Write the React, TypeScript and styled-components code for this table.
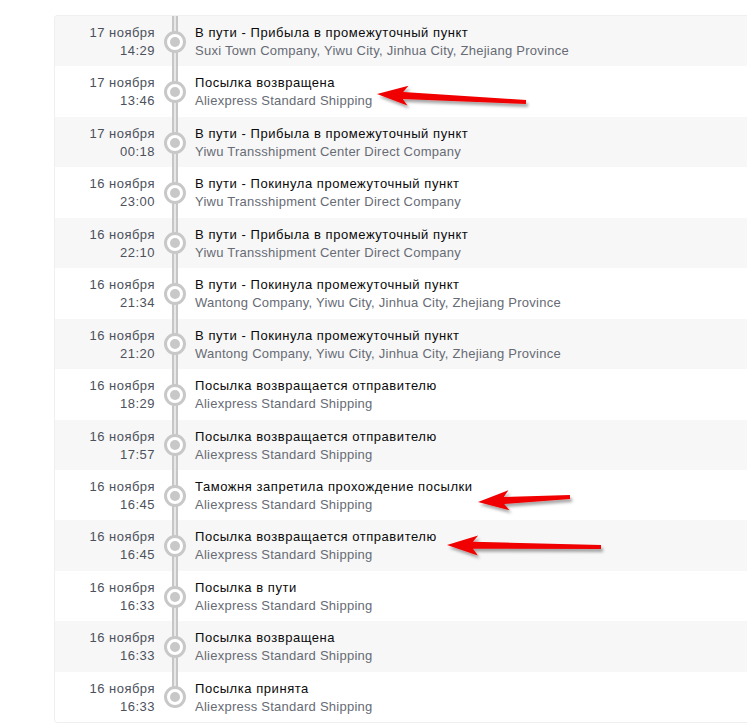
import React from 'react';
import styled, { createGlobalStyle } from 'styled-components';

const GlobalStyle = createGlobalStyle`
  html, body {
    margin: 0;
    padding: 0;
    background: #fff;
    overflow: hidden;
  }
  body {
    font-family: "Liberation Sans", Arial, sans-serif;
  }
`;

const SPage = styled.div`
  position: relative;
  width: 747px;
  height: 724px;
  padding: 15px 0 0 54px;
  box-sizing: border-box;
`;

const SList = styled.div`
  width: 720px;
  border: 1px solid #efefef;
  border-right: none;
  border-radius: 4px 0 0 4px;
  overflow: hidden;
`;

const SRow = styled.div<{ $odd: boolean }>`
  display: grid;
  grid-template-columns: 100px 40px 1fr;
  height: 50.45px;
  background: ${(p) => (p.$odd ? '#f7f7f7' : '#fff')};
  font-size: 13px;
  line-height: 18px;
  letter-spacing: 0.4px;
`;

const SDate = styled.div`
  padding-top: 8px;
  text-align: right;
  color: #4c515c;
  letter-spacing: 0.5px;
`;

const STrack = styled.div<{ $last: boolean }>`
  position: relative;
  display: flex;
  align-items: center;
  justify-content: center;
  padding-top: 1px;

  &::before {
    content: '';
    position: absolute;
    top: 0;
    bottom: ${(p) => (p.$last ? '50%' : '0')};
    left: 50%;
    width: 2px;
    margin-left: -3px;
    background: #e8e8e8;
    border-left: 2px solid #c6c6c6;
    border-right: 2px solid #c6c6c6;
  }
`;

const SDot = styled.div`
  position: relative;
  width: 22px;
  height: 22px;
  box-sizing: border-box;
  border: 3px solid #c8c8c8;
  border-radius: 50%;
  background: #fff;
  display: flex;
  align-items: center;
  justify-content: center;

  &::after {
    content: '';
    width: 10px;
    height: 10px;
    border-radius: 50%;
    background: #c8c8c8;
  }
`;

const SInfo = styled.div`
  padding-top: 8px;
  white-space: nowrap;
`;

const STitle = styled.div`
  color: #0a0a0a;
  letter-spacing: 0.55px;
`;

const SPlace = styled.div`
  color: #676b75;
  letter-spacing: 0.25px;
`;

const SMarks = styled.svg`
  position: absolute;
  left: 0;
  top: 0;
  pointer-events: none;
`;

type Event = { day: string; time: string; title: string; place: string };

const SHIP = 'Aliexpress Standard Shipping';
const YIWU = 'Yiwu Transshipment Center Direct Company';
const WANTONG = 'Wantong Company, Yiwu City, Jinhua City, Zhejiang Province';

const events: Event[] = [
  { day: '17 ноября', time: '14:29', title: 'В пути - Прибыла в промежуточный пункт', place: 'Suxi Town Company, Yiwu City, Jinhua City, Zhejiang Province' },
  { day: '17 ноября', time: '13:46', title: 'Посылка возвращена', place: SHIP },
  { day: '17 ноября', time: '00:18', title: 'В пути - Прибыла в промежуточный пункт', place: YIWU },
  { day: '16 ноября', time: '23:00', title: 'В пути - Покинула промежуточный пункт', place: YIWU },
  { day: '16 ноября', time: '22:10', title: 'В пути - Прибыла в промежуточный пункт', place: YIWU },
  { day: '16 ноября', time: '21:34', title: 'В пути - Покинула промежуточный пункт', place: WANTONG },
  { day: '16 ноября', time: '21:20', title: 'В пути - Покинула промежуточный пункт', place: WANTONG },
  { day: '16 ноября', time: '18:29', title: 'Посылка возвращается отправителю', place: SHIP },
  { day: '16 ноября', time: '17:57', title: 'Посылка возвращается отправителю', place: SHIP },
  { day: '16 ноября', time: '16:45', title: 'Таможня запретила прохождение посылки', place: SHIP },
  { day: '16 ноября', time: '16:45', title: 'Посылка возвращается отправителю', place: SHIP },
  { day: '16 ноября', time: '16:33', title: 'Посылка в пути', place: SHIP },
  { day: '16 ноября', time: '16:33', title: 'Посылка возвращена', place: SHIP },
  { day: '16 ноября', time: '16:33', title: 'Посылка принята', place: SHIP },
];

// tip -> tail of each red annotation arrow
const arrows = [
  { tip: [377, 94], tail: [526, 102] },
  { tip: [478, 502], tail: [570, 497] },
  { tip: [447, 545], tail: [601, 547] },
];

function arrowPoints(tip: number[], tail: number[]) {
  const dx = tail[0] - tip[0];
  const dy = tail[1] - tip[1];
  const len = Math.hypot(dx, dy);
  const ux = dx / len;
  const uy = dy / len;
  const nx = -uy;
  const ny = ux;
  const head = 29;
  const bx = tip[0] + ux * head;
  const by = tip[1] + uy * head;
  const pt = (x: number, y: number, w: number) => `${(x + nx * w).toFixed(1)},${(y + ny * w).toFixed(1)}`;
  return [
    `${tip[0]},${tip[1]}`,
    pt(bx + ux * 2, by + uy * 2, 10),
    pt(bx - ux * 3, by - uy * 3, 3.5),
    pt(tail[0], tail[1], 2),
    pt(tail[0], tail[1], -2),
    pt(bx - ux * 3, by - uy * 3, -3.5),
    pt(bx + ux * 2, by + uy * 2, -10),
  ].join(' ');
}

function App() {
  return (
    <SPage>
      <GlobalStyle />
      <SList>
        {events.map((e, i) => (
          <SRow key={i} $odd={i % 2 === 0}>
            <SDate>
              <div>{e.day}</div>
              <div>{e.time}</div>
            </SDate>
            <STrack $last={i === events.length - 1}>
              <SDot />
            </STrack>
            <SInfo>
              <STitle>{e.title}</STitle>
              <SPlace>{e.place}</SPlace>
            </SInfo>
          </SRow>
        ))}
      </SList>
      <SMarks width="747" height="724" viewBox="0 0 747 724">
        <defs>
          <filter id="shade" x="-20%" y="-50%" width="140%" height="200%">
            <feDropShadow dx="2" dy="3" stdDeviation="1.5" floodColor="#000" floodOpacity="0.35" />
          </filter>
        </defs>
        {arrows.map((a, i) => (
          <polygon key={i} points={arrowPoints(a.tip, a.tail)} fill="#f00000" filter="url(#shade)" />
        ))}
      </SMarks>
    </SPage>
  );
}

export default App;
